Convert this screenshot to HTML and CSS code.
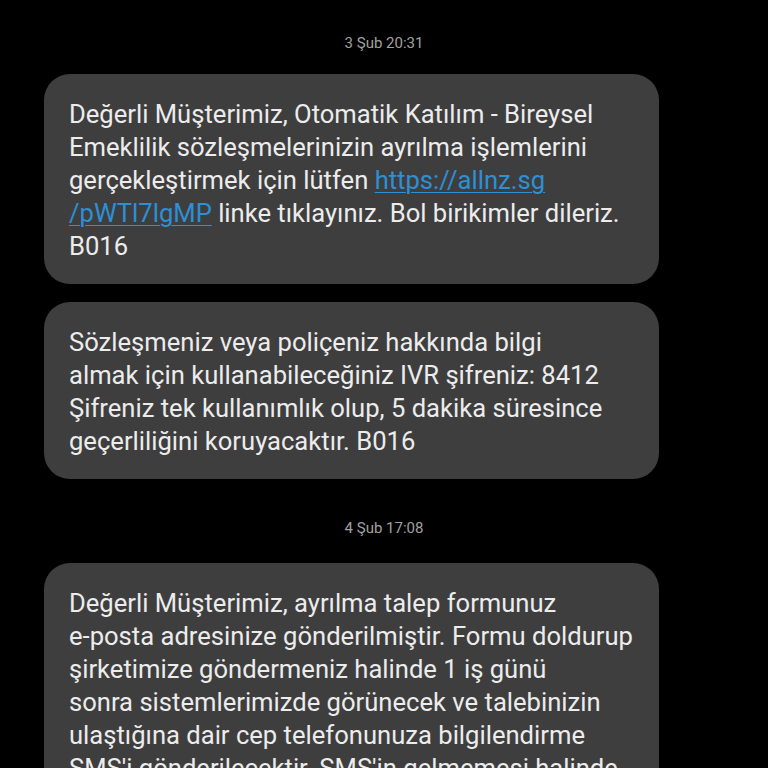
FILE: index.html
```html
<!DOCTYPE html>
<html lang="tr">
<head>
<meta charset="utf-8">
<link rel="stylesheet" href="styles.css">
</head>
<body>
<div class="thread">
  <div class="stamp">3 Şub 20:31</div>
  <div class="bubble">Değerli Müşterimiz, Otomatik Katılım - Bireysel<br>Emeklilik sözleşmelerinizin ayrılma işlemlerini<br>gerçekleştirmek için lütfen <a class="link" href="#">https://allnz.sg<br>/pWTl7lgMP</a> linke tıklayınız. Bol birikimler dileriz.<br>B016</div>
  <div class="bubble">Sözleşmeniz veya poliçeniz hakkında bilgi<br>almak için kullanabileceğiniz IVR şifreniz: 8412<br>Şifreniz tek kullanımlık olup, 5 dakika süresince<br>geçerliliğini koruyacaktır. B016</div>
  <div class="stamp stamp2">4 Şub 17:08</div>
  <div class="bubble">Değerli Müşterimiz, ayrılma talep formunuz<br>e-posta adresinize gönderilmiştir. Formu doldurup<br>şirketimize göndermeniz halinde 1 iş günü<br>sonra sistemlerimizde görünecek ve talebinizin<br>ulaştığına dair cep telefonunuza bilgilendirme<br>SMS'i gönderilecektir. SMS'in gelmemesi halinde</div>
</div>
</body>
</html>
```
FILE: styles.css
```css
html, body {
  margin: 0;
  padding: 0;
  background: #000;
  height: 768px;
  overflow: hidden;
}
.thread {
  display: flex;
  flex-direction: column;
  padding: 33px 0 0 0;
  font-family: Roboto, "Noto Sans", sans-serif;
}
.stamp {
  text-align: center;
  font-size: 15px;
  line-height: 20px;
  color: #a0a0a0;
  margin-bottom: 21px;
}
.stamp2 {
  margin-top: 21px;
  margin-bottom: 25px;
}
.bubble {
  width: 615px;
  margin-left: 44px;
  box-sizing: border-box;
  background: #3e3e3e;
  border-radius: 26px;
  padding: 24px 25px 21px 25px;
  color: #ececec;
  font-size: 25.6px;
  line-height: 33px;
  white-space: nowrap;
  margin-bottom: 18px;
}
.link {
  color: #2e8fd4;
  text-decoration: underline;
  text-decoration-thickness: 1px;
  text-underline-offset: 3px;
}
```
